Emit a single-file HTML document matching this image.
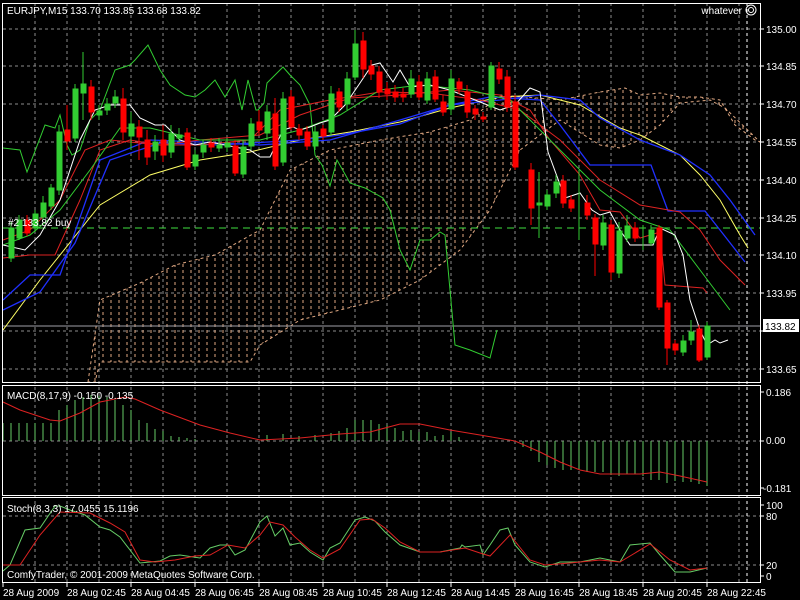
<!DOCTYPE html>
<html><head><meta charset="utf-8"><style>
html,body{margin:0;padding:0;background:#000;width:800px;height:600px;overflow:hidden}
svg{display:block}
text{font-family:"Liberation Sans",sans-serif;font-size:10px;fill:#fff}
</style></head><body>
<svg width="800" height="600" viewBox="0 0 800 600" xmlns="http://www.w3.org/2000/svg">
<defs>
<pattern id="hatch" width="8" height="6" patternUnits="userSpaceOnUse" x="3">
<line x1="4" y1="0" x2="4" y2="3" stroke="#e0a882" stroke-width="1"/>
</pattern>
<clipPath id="cm"><rect x="3" y="3" width="757" height="379"/></clipPath>
</defs>
<rect width="800" height="600" fill="#000"/>
<g stroke="#8c8c8c" stroke-dasharray="3,3" stroke-width="1">
<path d="M35 3V582M67 3V582M99 3V582M131 3V582M163 3V582M195 3V582M227 3V582M259 3V582M291 3V582M323 3V582M355 3V582M387 3V582M419 3V582M451 3V582M483 3V582M515 3V582M547 3V582M579 3V582M611 3V582M643 3V582M675 3V582M707 3V582M739 3V582"/>
<path d="M3 29H760M3 66H760M3 104H760M3 142H760M3 180H760M3 218H760M3 255H760M3 293H760M3 331H760M3 369H760"/>
<path d="M3 441H760M3 516H760M3 565H760"/>
</g>
<line x1="747" y1="3" x2="747" y2="582" stroke="#fff" stroke-dasharray="3,3"/>
<g clip-path="url(#cm)">
<path d="M88 382L100 300L140 283L175 265L215 255L260 230L290 170L330 150L380 140L430 132L470 120L500 95L560 100L600 92L625 88L640 95L660 93L680 97L700 97L720 100L735 125L755 140L760 142L725 108L710 100L680 103L660 125L640 140L620 148L600 145L560 120L520 150L500 190L490 210L460 250L420 280L380 300L300 320L260 345L250 362L100 362L95 382Z" fill="url(#hatch)" stroke="#e0a882" stroke-dasharray="3,3" stroke-width="1"/>
<line x1="3" y1="228" x2="760" y2="228" stroke="#40e040" stroke-dasharray="7,5"/>
<line x1="3" y1="326" x2="760" y2="326" stroke="#a0a0a8"/>
<g fill="none" stroke-width="1">
<polyline stroke="#32cd32" points="3,148 20,150 27,172 45,125 55,128 60,115 67,145 72,155 80,150 90,120 100,110 115,70 130,65 135,60 148,45 160,70 170,85 185,95 195,97 205,90 215,80 225,97 235,80 242,110 248,80 256,110 258,110 264,103 267,83 283,67 290,75 300,85 310,105 315,155 322,165 330,186 337,160 350,183 365,188 383,198 390,210 400,250 410,270 420,240 430,240 440,232 445,235 455,345 470,350 490,358 497,330"/>
<polyline stroke="#ffff66" points="3,330 40,280 100,205 150,175 200,160 250,152 300,140 350,132 400,122 450,108 500,97 540,95 580,105 620,128 640,135 680,155 700,175 720,200 740,235 748,248"/>
<polyline stroke="#2030ff" stroke-width="1.3" points="3,300 30,275 60,275 100,160 150,140 200,142 260,145 330,140 400,120 450,105 500,100 540,95 580,100 600,118 640,140 680,155 710,175 730,200 755,235"/>
<polyline stroke="#2030ff" stroke-width="1.3" points="3,310 40,292 75,243 110,160 160,143 220,145 300,140 340,135 400,124 450,105 490,97 540,100 560,125 590,165 651,165 668,211 705,211 720,230 745,262"/>
<polyline stroke="#dd2222" points="3,258 30,255 55,255 80,200 100,150 130,140 160,145 200,145 250,140 280,110 330,100 380,92 430,93 480,100 520,110 560,140 600,180 640,205 680,212 700,230 720,260 745,285"/>
<polyline stroke="#dd2222" points="3,240 30,230 60,200 85,150 110,140 160,145 200,140 260,135 300,115 350,98 400,95 450,90 500,95 530,110 550,140 580,175 600,210 620,212 640,238 660,232 665,285 703,288 707,293"/>
<polyline stroke="#32cd32" points="3,245 30,235 60,210 90,170 120,128 150,128 200,140 260,140 300,130 340,115 380,90 420,85 470,90 510,100 540,130 570,160 600,190 640,220 670,230 700,270 730,310"/>
<polyline stroke="#ffffff" points="3,245 25,250 40,235 60,200 80,140 95,110 110,105 130,105 140,118 155,125 165,125 180,140 195,145 210,142 225,145 250,150 260,157 270,157 283,130 293,127 300,130 310,127 320,123 330,120 345,105 360,83 372,65 380,63 393,82 400,70 410,87 430,85 450,90 475,100 500,110 515,105 530,88 540,92 548,152 565,198 580,193 592,210 600,215 610,212 620,230 630,245 653,245 660,228 675,235 683,255 690,300 700,330 707,345 715,340 720,343 728,340"/>
</g>
<g stroke-width="1">
<g stroke="#32cd32" fill="#32cd32">
<path d="M11 222V262M19 215V240M35 210V232M43 196V220M51 184V210M59 125V195M75 84V142M83 52V120M99 105V120M107 98V115M115 90V108M131 112V150M155 135V160M171 125V158M179 128V142M195 150V170M203 140V158M219 138V152M227 138V152M243 140V178M251 118V150M267 105V140M283 92V166M315 126V150M331 86V136M347 72V110M355 30V80M411 70V98M427 72V104M451 70V115M491 62V110M539 172V238M547 190V210M556 175V198M579 170V240M603 215V250M619 222V278M627 215V242M643 225V250M651 225V246M683 335V356M691 320V345M707 322V360"/>
<rect x="9" y="228" width="5" height="30"/><rect x="17" y="220" width="5" height="18"/><rect x="33" y="214" width="5" height="14"/><rect x="41" y="203" width="5" height="14"/><rect x="49" y="188" width="5" height="18"/><rect x="57" y="132" width="5" height="58"/><rect x="73" y="89" width="5" height="49"/><rect x="81" y="84" width="5" height="9"/><rect x="97" y="111" width="5" height="4"/><rect x="105" y="104" width="5" height="6"/><rect x="113" y="97" width="5" height="6"/><rect x="129" y="124" width="5" height="12"/><rect x="153" y="142" width="5" height="9"/><rect x="169" y="134" width="5" height="18"/><rect x="177" y="135" width="5" height="3"/><rect x="193" y="155" width="5" height="11"/><rect x="201" y="145" width="5" height="7"/><rect x="217" y="145" width="5" height="3"/><rect x="225" y="143" width="5" height="4"/><rect x="241" y="147" width="5" height="27"/><rect x="249" y="124" width="5" height="22"/><rect x="265" y="112" width="5" height="21"/><rect x="281" y="99" width="5" height="63"/><rect x="313" y="132" width="5" height="14"/><rect x="329" y="94" width="5" height="38"/><rect x="345" y="79" width="5" height="25"/><rect x="353" y="44" width="5" height="33"/><rect x="409" y="79" width="5" height="15"/><rect x="425" y="79" width="5" height="21"/><rect x="449" y="79" width="5" height="30"/><rect x="489" y="66" width="5" height="41"/><rect x="537" y="203" width="5" height="2"/><rect x="545" y="195" width="5" height="11"/><rect x="554" y="182" width="5" height="11"/><rect x="601" y="223" width="5" height="22"/><rect x="617" y="231" width="5" height="42"/><rect x="625" y="226" width="5" height="12"/><rect x="649" y="230" width="5" height="13"/><rect x="681" y="341" width="5" height="11"/><rect x="689" y="332" width="5" height="8"/><rect x="705" y="326" width="5" height="31"/>
</g>
<g stroke="#ff0000" fill="#ff0000">
<path d="M27 215V236M67 105V150M91 80V120M123 88V140M139 120V160M147 130V165M163 125V162M187 128V170M211 138V152M235 140V176M259 110V135M275 98V170M291 90V130M299 124V140M307 126V150M323 125V140M339 88V112M363 32V78M371 60V80M379 66V98M387 82V100M395 85V102M403 88V102M419 75V100M435 70V102M443 95V116M459 78V94M467 85V118M475 105V120M483 112V122M499 62V84M507 70V112M515 95V170M531 163V225M563 175V208M571 195V212M587 195V220M595 214V276M611 220V280M635 222V242M659 225V310M667 300V365M675 340V355M699 325V362"/>
<rect x="25" y="220" width="5" height="13"/><rect x="65" y="130" width="5" height="11"/><rect x="89" y="87" width="5" height="25"/><rect x="121" y="99" width="5" height="33"/><rect x="137" y="127" width="5" height="10"/><rect x="145" y="140" width="5" height="17"/><rect x="161" y="140" width="5" height="15"/><rect x="185" y="133" width="5" height="34"/><rect x="209" y="143" width="5" height="4"/><rect x="233" y="146" width="5" height="27"/><rect x="257" y="122" width="5" height="8"/><rect x="273" y="114" width="5" height="52"/><rect x="289" y="97" width="5" height="30"/><rect x="297" y="129" width="5" height="6"/><rect x="305" y="132" width="5" height="14"/><rect x="321" y="129" width="5" height="7"/><rect x="337" y="92" width="5" height="15"/><rect x="361" y="41" width="5" height="28"/><rect x="369" y="66" width="5" height="8"/><rect x="377" y="72" width="5" height="20"/><rect x="385" y="89" width="5" height="5"/><rect x="393" y="92" width="5" height="5"/><rect x="401" y="94" width="5" height="3"/><rect x="417" y="82" width="5" height="15"/><rect x="433" y="77" width="5" height="22"/><rect x="441" y="102" width="5" height="10"/><rect x="457" y="82" width="5" height="7"/><rect x="465" y="92" width="5" height="20"/><rect x="473" y="109" width="5" height="5"/><rect x="481" y="117" width="5" height="2"/><rect x="497" y="69" width="5" height="10"/><rect x="505" y="77" width="5" height="30"/><rect x="513" y="102" width="5" height="65"/><rect x="529" y="170" width="5" height="38"/><rect x="561" y="181" width="5" height="22"/><rect x="569" y="200" width="5" height="8"/><rect x="585" y="203" width="5" height="12"/><rect x="593" y="218" width="5" height="26"/><rect x="609" y="225" width="5" height="47"/><rect x="633" y="228" width="5" height="10"/><rect x="657" y="228" width="5" height="79"/><rect x="665" y="303" width="5" height="45"/><rect x="673" y="344" width="5" height="6"/><rect x="697" y="329" width="5" height="31"/>
</g>
</g>
</g>
<path stroke="#66cc66" fill="none" d="M3 441V423M11 441V423M19 441V423M27 441V423M35 441V423M43 441V423M51 441V423M59 441V410M67 441V405M75 441V400M83 441V397M91 441V395M99 441V396M107 441V397M115 441V400M123 441V405M131 441V410M139 441V420M147 441V423M155 441V429M163 441V431M171 441V436M179 441V437M187 441V438M195 441V439M267 441V435M283 441V434M299 441V436M315 441V435M331 441V433M339 441V431M347 441V428M355 441V420M363 441V420M371 441V420M379 441V424M387 441V425M395 441V428M403 441V431M411 441V430M419 441V432M427 441V432M435 441V436M443 441V435M451 441V432M459 441V437M523 441V447M531 441V451M539 441V462M547 441V465M555 441V468M563 441V470M571 441V470M579 441V470M587 441V472M595 441V472M603 441V472M611 441V475M619 441V476M627 441V474M635 441V474M643 441V476M651 441V480M659 441V480M667 441V483M675 441V481M683 441V482M691 441V482M699 441V484M707 441V486"/>
<polyline fill="none" stroke="#dd2222" points="3,402 20,410 50,420 60,421 80,413 100,402 125,397 135,399 160,410 200,425 230,433 260,440 300,438 340,434 370,432 400,424 420,424 450,430 480,435 515,441 540,452 560,462 580,470 600,474 640,474 660,472 680,476 707,482"/>
<polyline fill="none" stroke="#66cc66" points="3,571 10,565 25,530 40,528 55,506 60,506 70,510 85,515 100,527 110,530 120,537 140,563 150,562 160,561 170,556 180,555 200,558 210,548 220,545 228,545 235,555 245,550 260,522 267,516 275,536 283,528 290,545 300,543 310,552 323,560 330,548 340,543 355,520 365,517 375,521 385,532 400,545 420,552 440,552 460,548 462,545 465,547 480,545 483,555 490,545 500,530 508,528 515,545 530,562 545,567 560,562 580,562 600,558 610,560 620,562 630,545 650,543 660,555 675,572 690,572 707,568"/>
<polyline fill="none" stroke="#dd2222" points="3,565 20,565 40,535 60,512 90,513 110,523 125,532 140,560 155,562 175,560 195,556 210,555 228,545 245,548 260,535 270,522 283,525 295,537 310,550 323,558 340,549 360,520 372,519 385,528 400,542 420,552 440,552 465,548 480,553 490,556 510,535 530,560 545,565 570,563 600,560 620,562 650,544 670,560 690,570 707,568"/>
<g fill="none" stroke="#fff" stroke-width="1">
<rect x="2.5" y="3.5" width="758" height="379"/>
<rect x="2.5" y="385.5" width="758" height="110"/>
<rect x="2.5" y="497.5" width="758" height="85"/>
</g>
<path stroke="#fff" d="M761 29h3M761 66h3M761 104h3M761 142h3M761 180h3M761 218h3M761 255h3M761 293h3M761 331h3M761 369h3M761 392h3M761 441h3M761 488h3M761 505h3M761 516h3M761 565h3M761 576h3M3 583v4M67 583v4M131 583v4M195 583v4M259 583v4M323 583v4M387 583v4M451 583v4M515 583v4M579 583v4M643 583v4M707 583v4"/>
<text x="7" y="14">EURJPY,M15  133.70 133.85 133.68 133.82</text>
<text x="742" y="14" text-anchor="end">whatever</text>
<circle cx="751" cy="10" r="5" fill="none" stroke="#fff"/><circle cx="751" cy="10" r="2.5" fill="none" stroke="#fff"/>
<text x="8" y="226">#2 133.82 buy</text>
<text x="7" y="399">MACD(8,17,9) -0.150 -0.135</text>
<text x="7" y="512">Stoch(8,3,3) 17.0455 15.1196</text>
<text x="7" y="578">ComfyTrader, © 2001-2009 MetaQuotes Software Corp.</text>
<g>
<text x="766" y="33">135.00</text><text x="766" y="70">134.85</text><text x="766" y="108">134.70</text><text x="766" y="146">134.55</text><text x="766" y="184">134.40</text><text x="766" y="222">134.25</text><text x="766" y="259">134.10</text><text x="766" y="297">133.95</text><text x="766" y="373">133.65</text>
<rect x="763" y="319" width="36" height="13" fill="#fff"/><text x="765" y="330" style="fill:#000">133.82</text>
<text x="766" y="396">0.186</text><text x="766" y="444">0.00</text><text x="763" y="492">-0.181</text>
<text x="766" y="509">100</text><text x="766" y="520">80</text><text x="766" y="569">20</text><text x="766" y="580">0</text>
</g>
<g>
<text x="3" y="596">28 Aug 2009</text><text x="67" y="596">28 Aug 02:45</text><text x="131" y="596">28 Aug 04:45</text><text x="195" y="596">28 Aug 06:45</text><text x="259" y="596">28 Aug 08:45</text><text x="323" y="596">28 Aug 10:45</text><text x="387" y="596">28 Aug 12:45</text><text x="451" y="596">28 Aug 14:45</text><text x="515" y="596">28 Aug 16:45</text><text x="579" y="596">28 Aug 18:45</text><text x="643" y="596">28 Aug 20:45</text><text x="707" y="596">28 Aug 22:45</text>
</g>
</svg>
</body></html>
